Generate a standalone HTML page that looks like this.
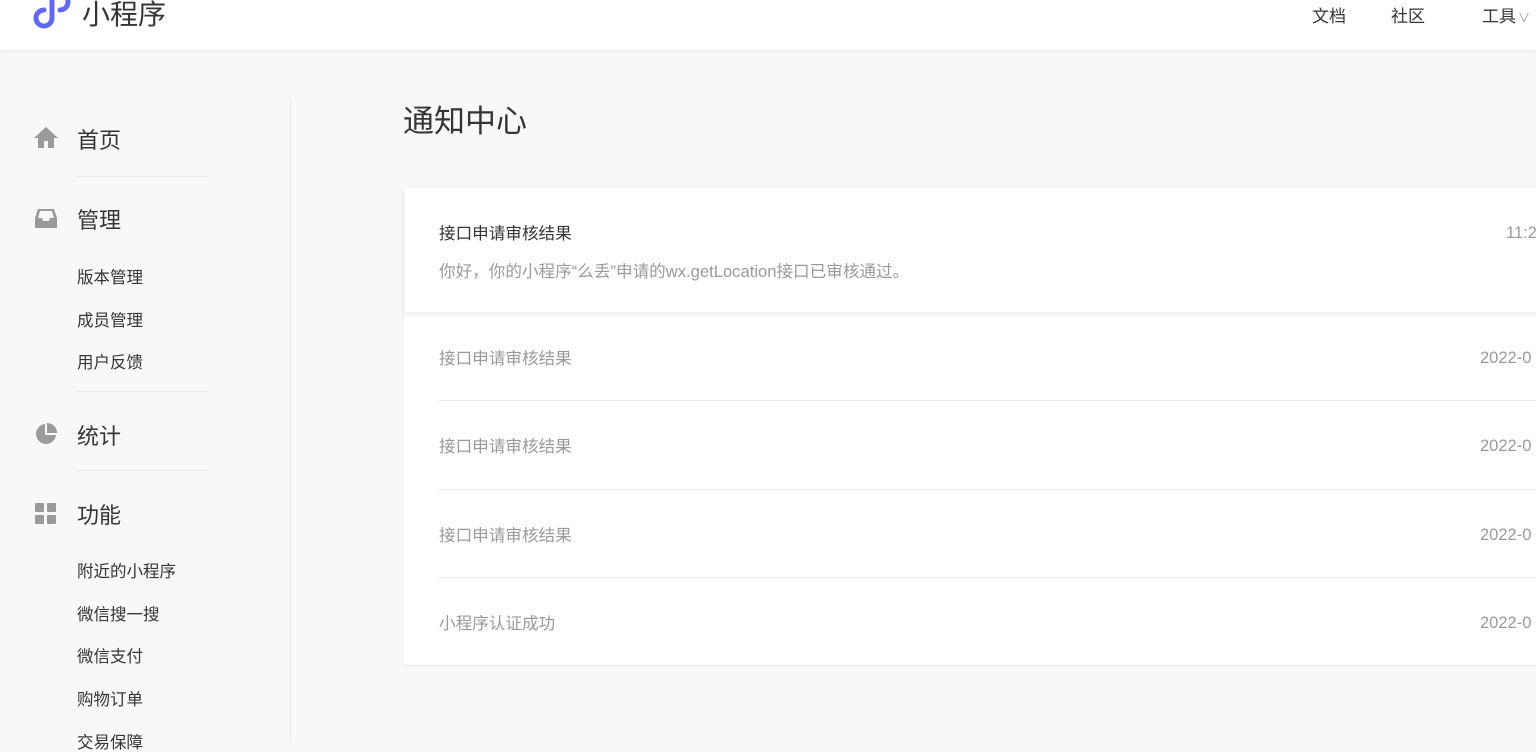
<!DOCTYPE html>
<html><head><meta charset="utf-8"><style>
*{margin:0;padding:0;box-sizing:border-box}
body{width:1536px;height:741px;overflow:hidden;background:#f7f8fa;font-family:"Liberation Sans","Noto Sans CJK SC",sans-serif;position:relative}
.hdr{position:absolute;left:0;top:0;width:1536px;height:50px;background:#fff;box-shadow:0 1px 3px rgba(0,0,0,.08)}
.a{position:absolute;white-space:nowrap;line-height:1}
.nav{font-size:17px;color:#353535;top:8px}
.side{position:absolute;left:290px;top:98px;width:1px;height:643px;background:#e7e7eb}
.m{font-size:22px;color:#353535;left:77px}
.s{font-size:16.5px;color:#353535;left:77px}
.dv{position:absolute;left:77px;width:131px;height:1px;background:#e7e7eb}
.card{position:absolute;left:404px;top:188px;width:1140px;height:477px;background:#fff;box-shadow:0 1px 2px rgba(0,0,0,.06)}
.first{position:absolute;left:404px;top:188px;width:1140px;height:124px;background:#fff;box-shadow:0 2px 6px rgba(0,0,0,.08)}
.t{font-size:16.6px;color:#9a9a9a;left:439px}
.d{font-size:16.5px;color:#9a9a9a;left:1480px}
.ln{position:absolute;left:439px;width:1100px;height:1px;background:#eaeaea}
</style></head><body>
<div class="hdr"></div>
<svg class="a" style="left:32px;top:-6px" width="40" height="38" viewBox="0 0 40 38"><path d="M20 8 V24 A8 8 0 1 1 12 16 M20 8 A8 8 0 1 1 28 16" fill="none" stroke="#6467f0" stroke-width="5" stroke-linecap="round"/></svg>
<div class="a" style="left:82px;top:1px;font-size:28px;color:#353535">小程序</div>
<div class="a nav" style="left:1312px">文档</div>
<div class="a nav" style="left:1391px">社区</div>
<div class="a nav" style="left:1482px">工具<span style="font-size:12px;color:#999;margin-left:2px">∨</span></div>
<div class="side"></div>
<svg class="a" style="left:33px;top:126px" width="26" height="24" viewBox="0 0 26 24"><path d="M13 1 L25 12 H21 V22 H15 V15 H11 V22 H5 V12 H1Z" fill="#9a9a9a"/></svg>
<div class="a m" style="top:130px">首页</div>
<div class="dv" style="top:176px"></div>
<svg class="a" style="left:34px;top:208px" width="24" height="22" viewBox="0 0 24 22"><path d="M4 1 H20 L23 10 V20 H1 V10 Z" fill="#9a9a9a"/><path d="M4 10 H8 L9 13 H15 L16 10 H20 L18 3 H6Z" fill="#f7f8fa"/></svg>
<div class="a m" style="top:210px">管理</div>
<div class="a s" style="top:270px">版本管理</div>
<div class="a s" style="top:313px">成员管理</div>
<div class="a s" style="top:355px">用户反馈</div>
<div class="dv" style="top:391px"></div>
<svg class="a" style="left:34px;top:422px" width="24" height="24" viewBox="0 0 24 24"><path d="M11 2 A10 10 0 1 0 22 13 H11Z" fill="#9a9a9a"/><path d="M13 1 A10 10 0 0 1 23 11 H13Z" fill="#9a9a9a"/></svg>
<div class="a m" style="top:426px">统计</div>
<div class="dv" style="top:470px"></div>
<svg class="a" style="left:35px;top:503px" width="22" height="22" viewBox="0 0 22 22"><rect x="0" y="0" width="9" height="9" rx="1" fill="#9a9a9a"/><rect x="12" y="0" width="9" height="9" rx="1" fill="#9a9a9a"/><rect x="0" y="12" width="9" height="9" rx="1" fill="#9a9a9a"/><rect x="12" y="12" width="9" height="9" rx="1" fill="#9a9a9a"/></svg>
<div class="a m" style="top:505px">功能</div>
<div class="a s" style="top:564px">附近的小程序</div>
<div class="a s" style="top:607px">微信搜一搜</div>
<div class="a s" style="top:649px">微信支付</div>
<div class="a s" style="top:692px">购物订单</div>
<div class="a s" style="top:735px">交易保障</div>
<div class="a" style="left:403px;top:106px;font-size:31px;color:#353535">通知中心</div>
<div class="card"></div>
<div class="first"></div>
<div class="a t" style="top:226px;color:#353535">接口申请审核结果</div>
<div class="a d" style="top:225px;left:1506px">11:2</div>
<div class="a t" style="top:264px">你好，你的小程序“么丢”申请的wx.getLocation接口已审核通过。</div>
<div class="a t" style="top:351px">接口申请审核结果</div><div class="a d" style="top:350px">2022-0</div>
<div class="ln" style="top:400px"></div>
<div class="a t" style="top:439px">接口申请审核结果</div><div class="a d" style="top:438px">2022-0</div>
<div class="ln" style="top:489px"></div>
<div class="a t" style="top:528px">接口申请审核结果</div><div class="a d" style="top:527px">2022-0</div>
<div class="ln" style="top:577px"></div>
<div class="a t" style="top:616px">小程序认证成功</div><div class="a d" style="top:615px">2022-0</div>
</body></html>
